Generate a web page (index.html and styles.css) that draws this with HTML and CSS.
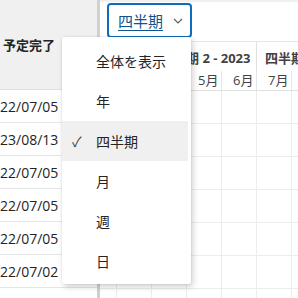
FILE: index.html
```html
<!DOCTYPE html>
<html lang="ja">
<head>
    <meta charset="UTF-8">
    <title>タイムライン</title>
    <link rel="stylesheet" href="styles.css">
</head>
<body>
    <div class="app">
        <div class="left">
            <div class="left-head">予定完了</div>
            <div class="row">22/07/05</div>
            <div class="row">23/08/13</div>
            <div class="row">22/07/05</div>
            <div class="row">22/07/05</div>
            <div class="row">22/07/05</div>
            <div class="row">22/07/02</div>
            <div class="row">22/07/02</div>
        </div>
        <div class="splitter"></div>
        <div class="right">
            <div class="toolbar">
                <button class="scale-btn">
                    <span class="scale-label">四半期</span>
                    <svg class="chev" width="10" height="6" viewBox="0 0 10 6"><path d="M1 1l4 4 4-4" fill="none" stroke="#616161" stroke-width="1.2"/></svg>
                </button>
            </div>
            <div class="timeline">
                <div class="quarters">
                    <div class="quarter q-part">四半期 1 - 2023</div>
                    <div class="quarter">四半期 2 - 2023</div>
                    <div class="quarter">四半期 3 - 2023</div>
                </div>
                <div class="months">
                    <div class="month">2月</div>
                    <div class="month">3月</div>
                    <div class="month">4月</div>
                    <div class="month">5月</div>
                    <div class="month">6月</div>
                    <div class="month">7月</div>
                    <div class="month">8月</div>
                </div>
                <div class="grid">
                    <div class="grow"></div>
                    <div class="grow"><span class="bar"></span></div>
                    <div class="grow"></div>
                    <div class="grow"></div>
                    <div class="grow"></div>
                    <div class="grow"></div>
                    <div class="grow"></div>
                </div>
            </div>
        </div>

        <div class="menu">
            <div class="item">全体を表示</div>
            <div class="item">年</div>
            <div class="item selected"><span class="check">✓</span>四半期</div>
            <div class="item">月</div>
            <div class="item">週</div>
            <div class="item">日</div>
        </div>
    </div>
</body>
</html>
```

FILE: styles.css
```css
body {
    margin: 0;
    font-family: "Open Sans", "Noto Sans CJK JP", sans-serif;
    font-size: 14px;
    color: #242424;
    background-color: #fff;
    overflow: hidden;
}

.app {
    display: flex;
    height: 298px;
    position: relative;
}

.left {
    width: 97px;
    flex-shrink: 0;
    overflow: hidden;
}

.left-head {
    height: 90px;
    box-sizing: border-box;
    background-color: #f0f0f0;
    border-bottom: 1px solid #e0e0e0;
    display: flex;
    align-items: center;
    padding-left: 3px;
    font-weight: 700;
    font-size: 13px;
}

.row {
    height: 33px;
    box-sizing: border-box;
    border-bottom: 1px solid #e6e6e6;
    display: flex;
    align-items: center;
    white-space: nowrap;
}

.splitter {
    width: 3px;
    flex-shrink: 0;
    background-color: #d1d1d1;
}

.right {
    flex: 1;
    overflow: hidden;
}

.toolbar {
    height: 42px;
    box-sizing: border-box;
    border-top: 2px solid #f0f0f0;
    border-bottom: 1px solid #e6e6e6;
    padding: 1px 0 0 7px;
}

.scale-btn {
    width: 85px;
    height: 35px;
    box-sizing: border-box;
    border: 2px solid #0f6cbd;
    border-radius: 4px;
    background-color: #fff;
    display: flex;
    align-items: center;
    padding: 0 0 0 9px;
    font-family: inherit;
    font-size: 15px;
    color: #0f548c;
    white-space: nowrap;
}

.scale-label {
    text-decoration: underline;
    text-underline-offset: 3px;
}

.chev {
    margin-left: 10px;
    flex-shrink: 0;
}

.timeline {
    margin-left: -18px;
    width: 400px;
}

.quarters {
    display: flex;
    height: 29px;
}

.quarter {
    width: 105px;
    flex-shrink: 0;
    box-sizing: border-box;
    border-right: 1px solid #e0e0e0;
    padding: 6px 0 0 8px;
    font-weight: 700;
    font-size: 13px;
    color: #424242;
    white-space: nowrap;
    overflow: hidden;
}

.q-part {
    width: 70px;
}

.months {
    display: flex;
    height: 19px;
    border-bottom: 1px solid #e0e0e0;
}

.month {
    width: 35px;
    flex-shrink: 0;
    box-sizing: border-box;
    border-right: 1px solid #e6e6e6;
    padding-left: 11px;
    font-size: 13px;
    color: #424242;
    line-height: 19px;
}

.grid {
    background-image: linear-gradient(to right, transparent 34px, #ececec 34px);
    background-size: 35px 100%;
}

.grow {
    height: 33px;
    box-sizing: border-box;
    border-bottom: 1px solid #ececec;
    position: relative;
}

.bar {
    position: absolute;
    left: 306px;
    top: 17px;
    width: 40px;
    height: 20px;
    box-sizing: border-box;
    border: 1.5px solid #8a8a8a;
    border-radius: 3px;
    background-color: #fff;
}

.menu {
    position: absolute;
    left: 62px;
    top: 37px;
    width: 129px;
    padding: 4px 0 3px;
    background-color: #fff;
    border-radius: 2px;
    box-shadow: 0 0 2px rgba(0, 0, 0, 0.12), 2px 3px 6px rgba(0, 0, 0, 0.18);
}

.item {
    height: 40px;
    display: flex;
    align-items: center;
    padding-left: 34px;
    position: relative;
    margin-right: 3px;
}

.selected {
    background-color: #f0f0f0;
}

.check {
    position: absolute;
    left: 10px;
    font-size: 14px;
    color: #424242;
}
```
